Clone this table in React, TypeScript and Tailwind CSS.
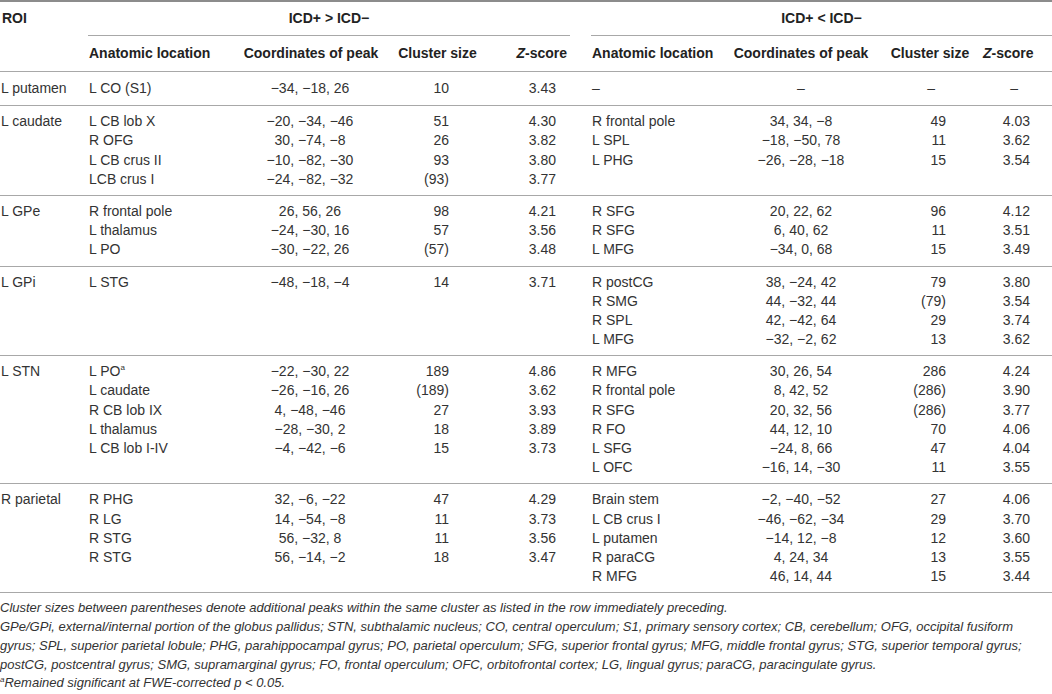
import React from "react";

type Row = [React.ReactNode, string, string, string];
type Group = { roi: string; left: Row[]; right: Row[]; py: string };

const M = "\u2212";
const c = (s: string) => s.replace(/-/g, M);

const groups: Group[] = [
  {
    roi: "L putamen",
    py: "py-[7px]",
    left: [["L CO (S1)", c("-34, -18, 26"), "10", "3.43"]],
    right: [["\u2013", "\u2013", "\u2013", "\u2013"]],
  },
  {
    roi: "L caudate",
    py: "py-[6px]",
    left: [
      ["L CB lob X", c("-20, -34, -46"), "51", "4.30"],
      ["R OFG", c("30, -74, -8"), "26", "3.82"],
      ["L CB crus II", c("-10, -82, -30"), "93", "3.80"],
      ["LCB crus I", c("-24, -82, -32"), "(93)", "3.77"],
    ],
    right: [
      ["R frontal pole", c("34, 34, -8"), "49", "4.03"],
      ["L SPL", c("-18, -50, 78"), "11", "3.62"],
      ["L PHG", c("-26, -28, -18"), "15", "3.54"],
    ],
  },
  {
    roi: "L GPe",
    py: "py-[6px]",
    left: [
      ["R frontal pole", "26, 56, 26", "98", "4.21"],
      ["L thalamus", c("-24, -30, 16"), "57", "3.56"],
      ["L PO", c("-30, -22, 26"), "(57)", "3.48"],
    ],
    right: [
      ["R SFG", "20, 22, 62", "96", "4.12"],
      ["R SFG", "6, 40, 62", "11", "3.51"],
      ["L MFG", c("-34, 0, 68"), "15", "3.49"],
    ],
  },
  {
    roi: "L GPi",
    py: "py-[6px]",
    left: [["L STG", c("-48, -18, -4"), "14", "3.71"]],
    right: [
      ["R postCG", c("38, -24, 42"), "79", "3.80"],
      ["R SMG", c("44, -32, 44"), "(79)", "3.54"],
      ["R SPL", c("42, -42, 64"), "29", "3.74"],
      ["L MFG", c("-32, -2, 62"), "13", "3.62"],
    ],
  },
  {
    roi: "L STN",
    py: "py-[6px]",
    left: [
      [
        <span key="lpo">
          L PO<sup className="text-[8px] relative -top-[6px] align-baseline">a</sup>
        </span>,
        c("-22, -30, 22"),
        "189",
        "4.86",
      ],
      ["L caudate", c("-26, -16, 26"), "(189)", "3.62"],
      ["R CB lob IX", c("4, -48, -46"), "27", "3.93"],
      ["L thalamus", c("-28, -30, 2"), "18", "3.89"],
      ["L CB lob I-IV", c("-4, -42, -6"), "15", "3.73"],
    ],
    right: [
      ["R MFG", "30, 26, 54", "286", "4.24"],
      ["R frontal pole", "8, 42, 52", "(286)", "3.90"],
      ["R SFG", "20, 32, 56", "(286)", "3.77"],
      ["R FO", "44, 12, 10", "70", "4.06"],
      ["L SFG", c("-24, 8, 66"), "47", "4.04"],
      ["L OFC", c("-16, 14, -30"), "11", "3.55"],
    ],
  },
  {
    roi: "R parietal",
    py: "py-[6px]",
    left: [
      ["R PHG", c("32, -6, -22"), "47", "4.29"],
      ["R LG", c("14, -54, -8"), "11", "3.73"],
      ["R STG", c("56, -32, 8"), "11", "3.56"],
      ["R STG", c("56, -14, -2"), "18", "3.47"],
    ],
    right: [
      ["Brain stem", c("-2, -40, -52"), "27", "4.06"],
      ["L CB crus I", c("-46, -62, -34"), "29", "3.70"],
      ["L putamen", c("-14, 12, -8"), "12", "3.60"],
      ["R paraCG", "4, 24, 34", "13", "3.55"],
      ["R MFG", "46, 14, 44", "15", "3.44"],
    ],
  },
];

const GRID =
  "grid grid-cols-[88px_148px_150px_103px_81px_21px_134px_152px_106px_69px]";
const CELL = "h-[19.2px] leading-[19.2px] whitespace-nowrap";

function GroupBlock({ g }: { g: Group }) {
  const n = Math.max(g.left.length, g.right.length);
  const rows = Array.from({ length: n });
  return (
    <div className={`${GRID} ${g.py} border-b border-[#a8a8a8]`}>
      {rows.map((_, i) => {
        const l = g.left[i];
        const r = g.right[i];
        const rDash = r && r[2] === "\u2013";
        return (
          <React.Fragment key={i}>
            <div className={`${CELL} pl-[1px]`}>{i === 0 ? g.roi : ""}</div>
            <div className={`${CELL} pl-[1px]`}>{l ? l[0] : ""}</div>
            <div className={`${CELL} text-center pr-[2px]`}>{l ? l[1] : ""}</div>
            <div className={`${CELL} text-right pr-[40px]`}>{l ? l[2] : ""}</div>
            <div className={`${CELL} text-right pr-[14px]`}>{l ? l[3] : ""}</div>
            <div className={CELL}></div>
            <div className={`${CELL} pl-[1px]`}>{r ? r[0] : ""}</div>
            <div className={`${CELL} text-center`}>{r ? r[1] : ""}</div>
            <div className={`${CELL} text-right ${rDash ? "pr-[48px]" : "pr-[37px]"}`}>
              {r ? r[2] : ""}
            </div>
            <div className={`${CELL} text-right ${rDash ? "pr-[34px]" : "pr-[22px]"}`}>
              {r ? r[3] : ""}
            </div>
          </React.Fragment>
        );
      })}
    </div>
  );
}

export default function App() {
  return (
    <div className="w-[1052px] h-[694px] overflow-hidden bg-white text-[#333] text-[14px] font-['Liberation_Sans',Arial,sans-serif]">
      <div className="border-t-2 border-[#8c8c8c]">
        {/* Header row 1 */}
        <div className={`${GRID} h-[34px] font-bold text-[#222]`}>
          <div className="pl-[2px] pt-[6.5px] leading-[19px]">ROI</div>
          <div className="col-span-4 border-b border-[#a8a8a8] text-center pt-[6.5px] leading-[19px]">
            ICD+ &gt; ICD{M}
          </div>
          <div></div>
          <div className="col-span-4 border-b border-[#a8a8a8] text-center pt-[6.5px] leading-[19px]">
            ICD+ &lt; ICD{M}
          </div>
        </div>
        {/* Header row 2 */}
        <div className={`${GRID} h-[36px] border-b border-[#a8a8a8] font-bold text-[#222] leading-[19px] pt-[7.5px]`}>
          <div></div>
          <div className="pl-[1px] whitespace-nowrap">Anatomic location</div>
          <div className="text-center whitespace-nowrap">Coordinates of peak</div>
          <div className="text-center whitespace-nowrap">Cluster size</div>
          <div className="text-right pr-[3px] whitespace-nowrap">
            <span className="italic">Z</span>-score
          </div>
          <div></div>
          <div className="pl-[1px] whitespace-nowrap">Anatomic location</div>
          <div className="text-center whitespace-nowrap">Coordinates of peak</div>
          <div className="text-center whitespace-nowrap">Cluster size</div>
          <div className="text-right pr-[21px] whitespace-nowrap">
            <span className="italic">Z</span>-score
          </div>
        </div>
        {groups.map((g) => (
          <GroupBlock key={g.roi} g={g} />
        ))}
        {/* Footnotes */}
        <div className="pt-[5.5px] italic text-[13px] leading-[18.9px] text-[#333] whitespace-nowrap">
          <p>
            Cluster sizes between parentheses denote additional peaks within the same cluster as listed in the row immediately preceding.
          </p>
          <p>
            GPe/GPi, external/internal portion of the globus pallidus; STN, subthalamic nucleus; CO, central operculum; S1, primary sensory cortex; CB, cerebellum; OFG, occipital fusiform
            <br />
            gyrus; SPL, superior parietal lobule; PHG, parahippocampal gyrus; PO, parietal operculum; SFG, superior frontal gyrus; MFG, middle frontal gyrus; STG, superior temporal gyrus;
            <br />
            postCG, postcentral gyrus; SMG, supramarginal gyrus; FO, frontal operculum; OFC, orbitofrontal cortex; LG, lingual gyrus; paraCG, paracingulate gyrus.
          </p>
          <p>
            <sup className="text-[8px] relative -top-[5px] align-baseline">a</sup>Remained significant at FWE-corrected p &lt; 0.05.
          </p>
        </div>
      </div>
    </div>
  );
}
